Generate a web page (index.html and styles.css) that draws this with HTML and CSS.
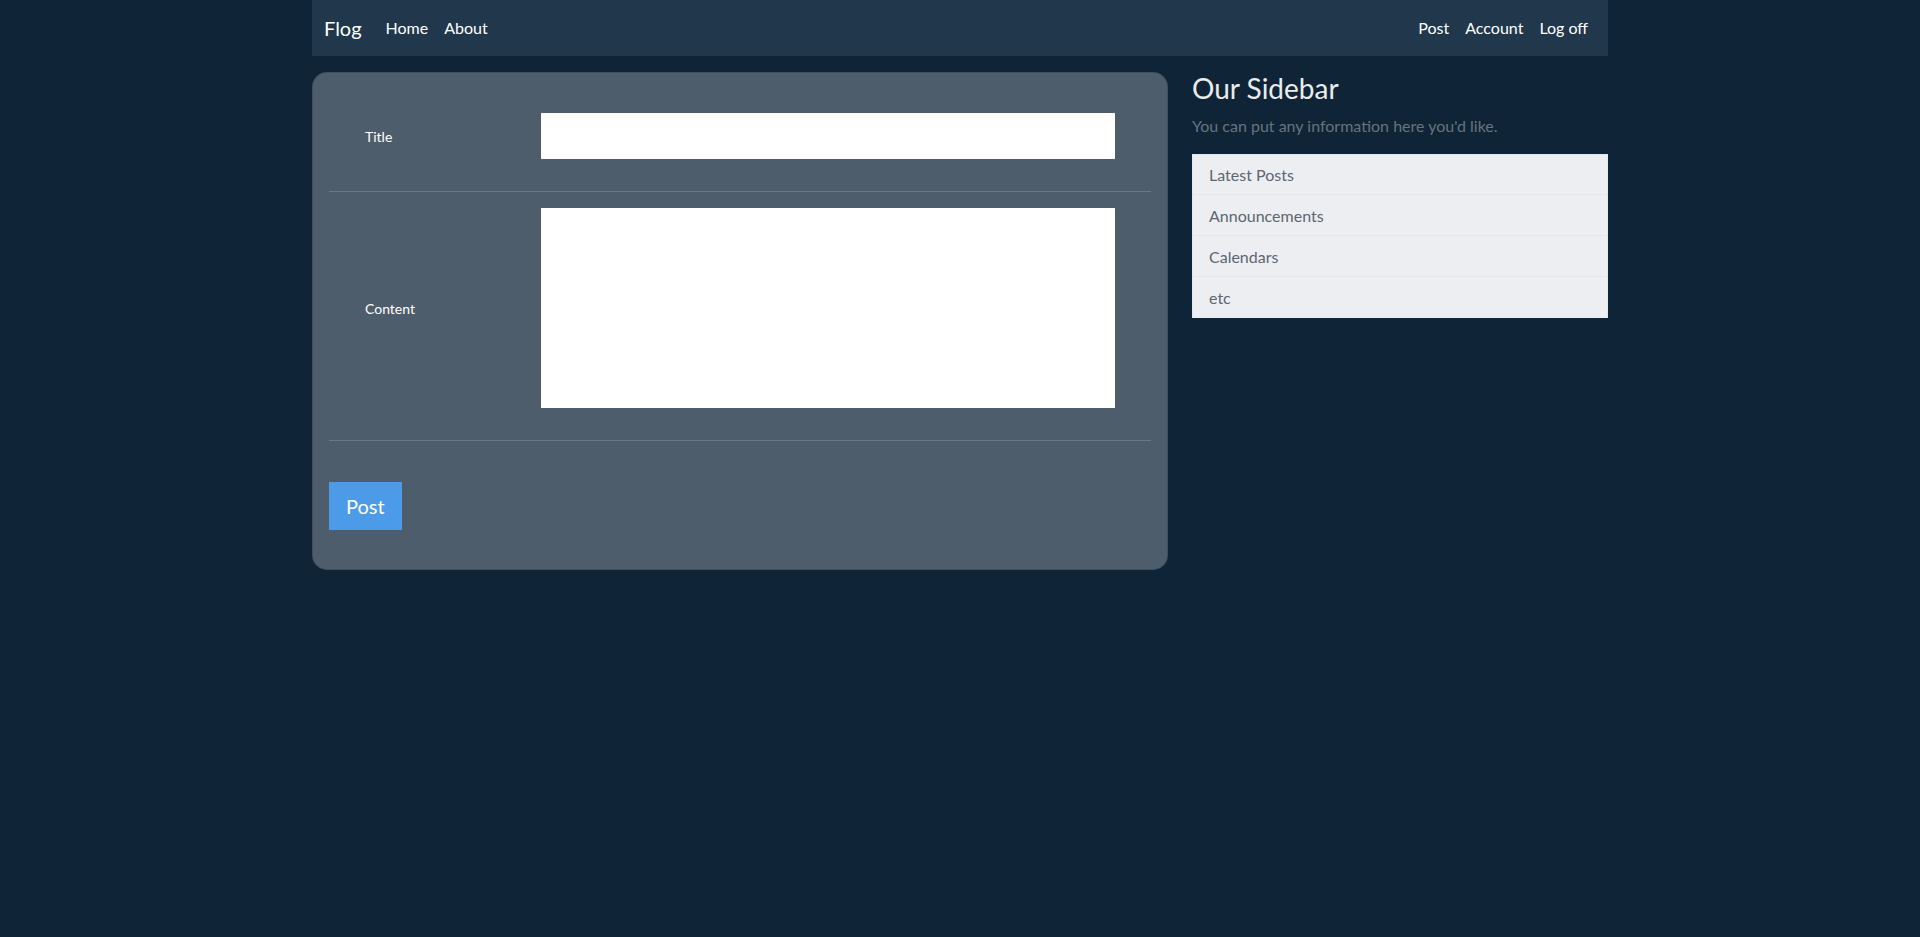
FILE: index.html
```html
<!DOCTYPE html>
<html lang="en">
<head>
<meta charset="utf-8">
<title>Flog</title>
<link rel="stylesheet" href="styles.css">
</head>
<body>
<div class="container">
  <nav class="navbar">
    <div class="nav-left">
      <a class="brand" href="#">Flog</a>
      <a class="nav-link" href="#">Home</a>
      <a class="nav-link" href="#">About</a>
    </div>
    <div class="nav-right">
      <a class="nav-link" href="#">Post</a>
      <a class="nav-link" href="#">Account</a>
      <a class="nav-link" href="#">Log off</a>
    </div>
  </nav>
  <div class="row">
    <main class="main-col">
      <div class="card">
        <form class="post-form">
          <div class="form-row first">
            <label class="form-label" for="title">Title</label>
            <input class="form-input" id="title" type="text">
          </div>
          <div class="form-row second">
            <label class="form-label" for="content">Content</label>
            <textarea class="form-textarea" id="content"></textarea>
          </div>
          <div class="form-actions">
            <button class="btn-post" type="button">Post</button>
          </div>
        </form>
      </div>
    </main>
    <aside class="side-col">
      <h3 class="side-title">Our Sidebar</h3>
      <p class="side-text">You can put any information here you'd like.</p>
      <ul class="list-group">
        <li class="list-item">Latest Posts</li>
        <li class="list-item">Announcements</li>
        <li class="list-item">Calendars</li>
        <li class="list-item">etc</li>
      </ul>
    </aside>
  </div>
</div>
</body>
</html>
```
FILE: styles.css
```css
* { box-sizing: border-box; }
html, body { margin: 0; padding: 0; }
body {
  background: #0f2537;
  color: #ebebeb;
  font-family: Lato, "Open Sans", "Liberation Sans", sans-serif;
  font-size: 16px;
  line-height: 1.5;
  min-height: 937px;
}
a { text-decoration: none; }
.container {
  width: 1320px;
  margin: 0 auto;
  padding: 0 12px;
}
.navbar {
  background: #20374c;
  height: 56px;
  padding: 8px 12px;
  display: flex;
  justify-content: space-between;
  align-items: center;
}
.nav-left, .nav-right { display: flex; align-items: center; }
.brand {
  color: #fff;
  font-size: 20px;
  line-height: 30px;
  margin-right: 16px;
}
.nav-link {
  color: #fff;
  font-size: 16px;
  line-height: 24px;
  padding: 8px;
}
.row {
  display: flex;
  gap: 24px;
  margin-top: 16px;
}
.main-col { width: 856px; flex: none; }
.side-col { width: 416px; flex: none; }
.card {
  background: #4e5d6c;
  border: 1px solid rgba(0,0,0,0.15);
  border-radius: 15px;
  padding: 16px 16px 39px;
}
.form-row {
  display: grid;
  grid-template-columns: 212px 574px;
  align-items: center;
  border-bottom: 1px solid #6b7886;
}
.form-row.first { padding: 24px 0 32px; }
.form-row.second { padding: 16px 0 32px; }
.form-label {
  padding-left: 36px;
  font-size: 14px;
  color: #fff;
}
.form-input {
  display: block;
  width: 574px;
  height: 46px;
  border: none;
  border-radius: 0;
  background: #fff;
  margin: 0;
}
.form-textarea {
  display: block;
  width: 574px;
  height: 200px;
  border: none;
  border-radius: 0;
  background: #fff;
  margin: 0;
  resize: none;
}
.form-actions { padding-top: 41px; }
.btn-post {
  display: block;
  background: #4c9be8;
  color: #fff;
  border: 1px solid #4c9be8;
  border-radius: 0;
  font-family: Lato, "Open Sans", sans-serif;
  font-size: 20px;
  line-height: 30px;
  padding: 8px 16px;
  height: 48px;
  cursor: pointer;
}
.side-title {
  margin: 0 0 8px;
  font-size: 28px;
  font-weight: 400;
  line-height: 1.2;
  color: #ebebeb;
}
.side-text {
  margin: 0 0 16px;
  color: #66737f;
  font-size: 16px;
  line-height: 24px;
}
.list-group {
  list-style: none;
  margin: 0;
  padding: 0;
  background: #edeef2;
}
.list-item {
  padding: 9px 16px 7px;
  border: 1px solid rgba(0,0,0,0.03);
  border-top: none;
  color: #5c6670;
  font-size: 16px;
  line-height: 24px;
  height: 41px;
}
.list-item:first-child { border-top: 1px solid rgba(0,0,0,0.03); padding-top: 8px; }
.list-item:last-child { border-bottom: none; }
```
